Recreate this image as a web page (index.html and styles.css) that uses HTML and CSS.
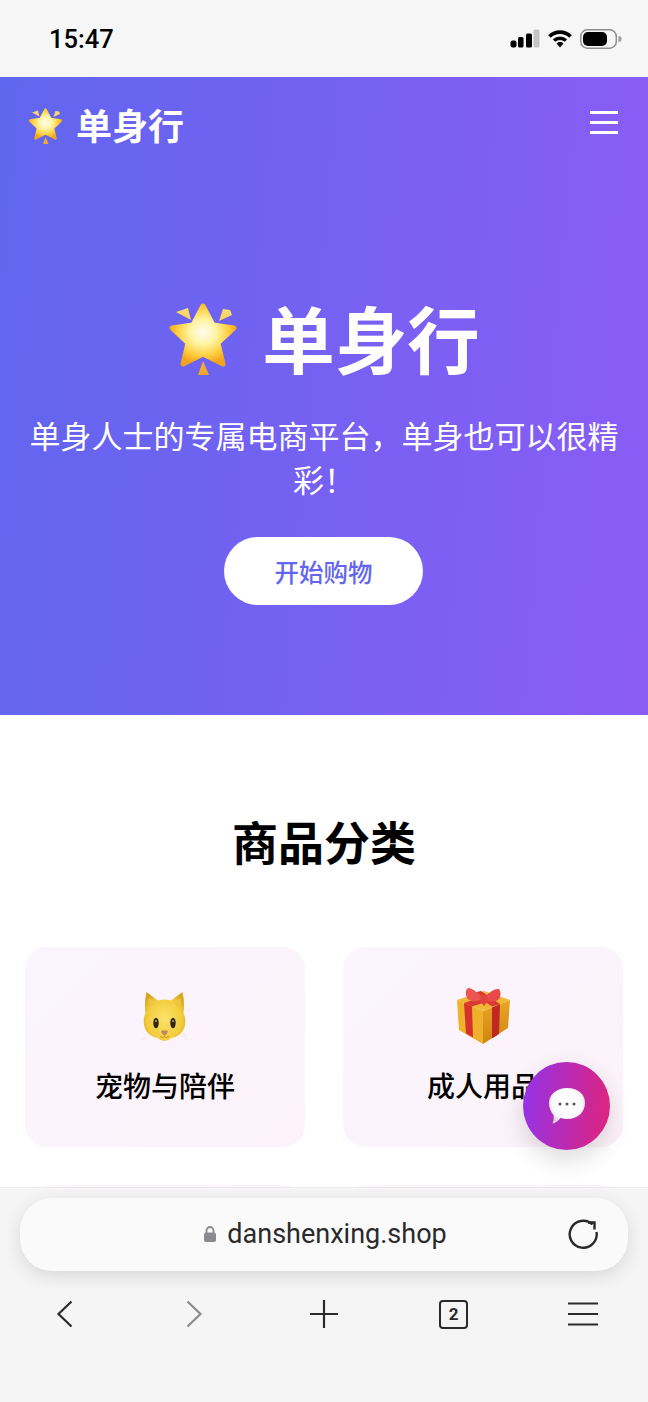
FILE: index.html
```html
<!DOCTYPE html>
<html lang="zh-CN">
<head>
<meta charset="utf-8">
<title>单身行</title>
<link rel="stylesheet" href="styles.css">
</head>
<body>
<svg class="defs" width="0" height="0" aria-hidden="true">
  <defs>
    <radialGradient id="starFill" cx="50%" cy="45%" r="55%">
      <stop offset="0" stop-color="#fffdf0"/>
      <stop offset="0.4" stop-color="#fff3a0"/>
      <stop offset="0.75" stop-color="#fdcf3e"/>
      <stop offset="1" stop-color="#f3a41f"/>
    </radialGradient>
    <linearGradient id="sparkFill" x1="0" y1="0" x2="0" y2="1">
      <stop offset="0" stop-color="#fbdc70"/>
      <stop offset="1" stop-color="#eea52a"/>
    </linearGradient>
    <radialGradient id="catFill" cx="50%" cy="55%" r="60%">
      <stop offset="0" stop-color="#fbe36a"/>
      <stop offset="0.7" stop-color="#f3cc3e"/>
      <stop offset="1" stop-color="#d9a31e"/>
    </radialGradient>
    <linearGradient id="boxFill" x1="0" y1="0" x2="0" y2="1">
      <stop offset="0" stop-color="#e9a626"/>
      <stop offset="1" stop-color="#cf8512"/>
    </linearGradient>
    <radialGradient id="bubbleFill" cx="50%" cy="45%" r="58%">
      <stop offset="0" stop-color="#ffffff"/>
      <stop offset="0.7" stop-color="#fbfbfb"/>
      <stop offset="1" stop-color="#d4d0d8"/>
    </radialGradient>
    <symbol id="starEmoji" viewBox="0 0 72 76">
      <path fill="url(#starFill)" stroke="url(#starFill)" stroke-width="5" stroke-linejoin="round" d="M35 5 L45 24 L66 27 L50 42 L55 63 L35 53 L15 63 L20 42 L4 27 L25 24 Z"/>
      <path fill="url(#sparkFill)" d="M8 11 L20 7 L23 19 Z M62 9 L64 14 L51 20 L55 8 Z M35 60 L41 74 L30 74 Z"/>
    </symbol>
  </defs>
</svg>
<div class="phone">
  <header class="status">
    <span class="time">15:47</span>
    <div class="status-icons">
      <svg width="30" height="20" viewBox="0 0 30 20">
        <rect x="0.500" y="11.500" width="6" height="7" rx="2" fill="#000"/>
        <rect x="8" y="8" width="5.500" height="10.500" rx="1.500" fill="#000"/>
        <rect x="16" y="4.500" width="6" height="14" rx="1.500" fill="#000"/>
        <rect x="23.500" y="0.500" width="6" height="18" rx="1.500" fill="#c4c4c4"/>
      </svg>
      <svg width="24" height="18" viewBox="0 0 24 18">
        <path d="M1.500 6.500 A15 15 0 0 1 22.500 6.500" fill="none" stroke="#000" stroke-width="3.800"/>
        <path d="M6 10.500 A9 9 0 0 1 18 10.500" fill="none" stroke="#000" stroke-width="3.400"/>
        <path d="M8.500 13.500 A5 5 0 0 1 15.500 13.500 L12 17.500 Z" fill="#000"/>
      </svg>
      <svg width="42" height="20" viewBox="0 0 42 20">
        <rect x="0.800" y="0.800" width="35.500" height="18.400" rx="6.500" fill="none" stroke="#8f8f8f" stroke-width="1.500"/>
        <rect x="3" y="3" width="24" height="14" rx="5" fill="#000"/>
        <path d="M38.500 7 a3 3 0 0 1 0 6 Z" fill="#9a9a9a"/>
      </svg>
    </div>
  </header>

  <main class="page">
    <section class="hero">
      <nav class="nav">
        <div class="logo">
          <svg class="logo-star"><use href="#starEmoji"/></svg>
          <span class="logo-text">单身行</span>
        </div>
        <div class="burger"><i></i><i></i><i></i></div>
      </nav>
      <div class="hero-body">
        <h1 class="hero-title">
          <svg class="hero-star"><use href="#starEmoji"/></svg>
          <span>单身行</span>
        </h1>
        <p class="hero-sub">单身人士的专属电商平台，单身也可以很精彩！</p>
        <a class="cta">开始购物</a>
      </div>
    </section>

    <section class="cats">
      <h2 class="cats-title">商品分类</h2>
      <div class="grid">
        <div class="card">
          <svg class="card-icon" viewBox="0 0 56 56">
            <path fill="url(#catFill)" d="M9.500 4 L21 12.500 Q27.500 10.500 34 12.500 L45.500 4 Q48 15 46.500 25 Q49.500 32 47.500 39 Q45 48 34.500 50 Q31 53 27.500 53 Q24 53 20.500 50 Q10 48 7.500 39 Q5.500 32 8.500 25 Q7 15 9.500 4 Z"/>
            <path fill="#eec53e" d="M11.500 10 L18 15 Q14 18 12 22 Z M43.500 10 L37 15 Q41 18 43 22 Z"/>
            <ellipse cx="19" cy="35" rx="2.700" ry="5.200" fill="#33240f"/>
            <ellipse cx="36" cy="35" rx="2.700" ry="5.200" fill="#33240f"/>
            <circle cx="19" cy="33" r="0.800" fill="#fff"/>
            <circle cx="36" cy="33" r="0.800" fill="#fff"/>
            <path fill="#c08a5e" d="M24 43 Q27.500 41.500 31 43 Q30 47 27.500 47 Q25 47 24 43 Z"/>
            <path d="M27.500 47 V48.500 M23 48.500 Q26 50.500 27.500 48.500 Q29 50.500 32 48.500" fill="none" stroke="#b5871f" stroke-width="0.800"/>
            <path d="M4 52 L10 48 M50 48 L45 45.500 M51 52 L45 48" stroke="#e6e1da" stroke-width="0.700"/>
          </svg>
          <span class="card-label">宠物与陪伴</span>
        </div>
        <div class="card">
          <svg class="card-icon" viewBox="0 0 56 56">
            <path fill="#efb02b" d="M2 12 L28 23 L28 56 L4 42 Z"/>
            <path fill="url(#boxFill)" d="M28 23 L55 12 L53 40 L28 56 Z"/>
            <path fill="#f0b835" d="M2 12 L29 3 L55 12 L28 23 Z"/>
            <path fill="#d6322c" d="M9 15 L17 18.500 L18 49.500 L11 45.500 Z"/>
            <path fill="#c02824" d="M37 19.500 L45 16 L44 46 L37 50.500 Z"/>
            <path fill="#d93b34" d="M9 15 L36 6 L45 9.500 L17 18.500 Z"/>
            <path fill="#d93b34" d="M17 5 L37 18.500 L45 16 L26 3 Z"/>
            <path fill="#ec5650" d="M27 9 Q18 0 13 0 Q9 3 12 10 Q15 15 26 12 Z"/>
            <path fill="#e8494a" d="M30 9 Q38 0 44 1 Q47 5 44 11 Q40 15 31 13 Z"/>
            <path fill="#e04442" d="M26 7 H32 L33 13 L29 18 L25 13 Z"/>
          </svg>
          <span class="card-label">成人用品</span>
        </div>
        <div class="card"></div>
        <div class="card"></div>
      </div>
    </section>
  </main>

  <footer class="browser">
    <div class="address">
      <span class="url">
        <svg class="lock" width="14" height="18" viewBox="0 0 14 18">
          <path d="M3.500 8 V5.500 a3.500 3.500 0 0 1 7 0 V8" fill="none" stroke="#8a8a8e" stroke-width="1.800"/>
          <rect x="1" y="7.500" width="12" height="9.500" rx="2" fill="#8a8a8e"/>
        </svg>
        <span>danshenxing.shop</span>
      </span>
      <svg class="reload" width="30" height="32" viewBox="0 0 30 32">
        <path d="M28.500 15 A13.500 13.500 0 1 1 24.500 7.500" fill="none" stroke="#2a2a2c" stroke-width="2.400"/>
        <path d="M20 5.500 H26.500 V12.500" fill="none" stroke="#2a2a2c" stroke-width="2.400"/>
      </svg>
    </div>
    <div class="toolbar">
      <svg width="30" height="30" viewBox="0 0 30 30"><path d="M21.500 2.500 L8.500 15 L21.500 27.500" fill="none" stroke="#2a2a2c" stroke-width="2.200"/></svg>
      <svg width="30" height="30" viewBox="0 0 30 30"><path d="M8.500 2.500 L21.500 15 L8.500 27.500" fill="none" stroke="#8a8a8e" stroke-width="2.200"/></svg>
      <svg width="30" height="30" viewBox="0 0 30 30"><path d="M15 1 V29 M1 15 H29" fill="none" stroke="#2a2a2c" stroke-width="2.200"/></svg>
      <span class="tabs">2</span>
      <svg width="32" height="30" viewBox="0 0 32 30"><path d="M1 4.500 H31 M1 15 H31 M1 25.500 H31" fill="none" stroke="#2a2a2c" stroke-width="2.200"/></svg>
    </div>
  </footer>

  <button class="fab" aria-label="聊天">
    <svg width="38" height="38" viewBox="0 0 38 38">
      <path fill="url(#bubbleFill)" d="M19 1 C31 1 37 8 37 16 C37 25 30 32 19 32 C17 32 14.500 31.500 12.500 31 C10.500 33.500 8 36 4.500 36.500 C5.500 34 6 31 5.500 28 C3 25 1 21 1 16 C1 8 8 1 19 1 Z"/>
      <circle cx="12" cy="17" r="1.500" fill="#55555a"/>
      <circle cx="19" cy="17" r="1.500" fill="#55555a"/>
      <circle cx="26" cy="17" r="1.500" fill="#55555a"/>
    </svg>
  </button>
</div>
</body>
</html>
```

FILE: styles.css
```css
* { box-sizing: border-box; }
html, body { margin: 0; padding: 0; }
body {
  width: 648px;
  height: 1402px;
  overflow: hidden;
  font-family: "Noto Sans CJK SC", "Noto Sans", sans-serif;
  background: #fff;
}
.defs { display: block; height: 0; }
.phone {
  position: relative;
  width: 648px;
  height: 1402px;
  display: flex;
  flex-direction: column;
  overflow: hidden;
}

/* status bar */
.status {
  flex: 0 0 77px;
  background: #f6f6f6;
  display: flex;
  align-items: center;
  justify-content: space-between;
  padding: 0 26px 0 49px;
}
.time {
  font-family: Roboto, Inter, sans-serif;
  font-size: 25.500px;
  font-weight: 500;
  color: #000;
}
.status-icons { display: flex; align-items: center; gap: 8px; }

/* page */
.page {
  flex: 1 1 0;
  min-height: 0;
  overflow: hidden;
  background: #fff;
}
.hero {
  height: 638px;
  background: linear-gradient(95deg, #6066ef 0%, #8b5cf6 100%);
  color: #fff;
  display: flex;
  flex-direction: column;
}
.nav {
  display: flex;
  align-items: center;
  justify-content: space-between;
  padding: 0 30px 0 28px;
  height: 98px;
}
.logo {
  display: flex;
  align-items: center;
  gap: 12px;
  font-size: 36px;
  font-weight: 700;
  line-height: 50px;
}
.logo-text { margin-top: -4px; }
.logo-star { width: 36px; height: 38px; }
.burger { display: flex; flex-direction: column; gap: 7px; width: 28px; margin-top: -8px; }
.burger i { display: block; height: 3px; background: #fff; }
.hero-body {
  display: flex;
  flex-direction: column;
  align-items: center;
  padding: 0 28px;
}
.hero-title {
  margin: 112px 0 0;
  display: flex;
  align-items: center;
  gap: 22px;
  font-size: 72.500px;
  font-weight: 700;
  line-height: 100px;
}
.hero-star { width: 72px; height: 76px; margin-top: 4px; }
.hero-sub {
  margin: 26px 0 0;
  font-size: 31px;
  line-height: 44px;
  text-align: center;
  font-weight: 400;
}
.cta {
  margin: 36px 1px 0 0;
  width: 199px;
  height: 68px;
  border-radius: 34px;
  background: #fff;
  color: #6366f1;
  font-size: 24.500px;
  font-weight: 500;
  display: flex;
  align-items: center;
  justify-content: center;
}

/* categories */
.cats { padding: 92px 25px 0; }
.cats-title {
  margin: 0;
  text-align: center;
  font-size: 46px;
  font-weight: 700;
  line-height: 66px;
  color: #000;
}
.grid {
  margin-top: 74px;
  display: grid;
  grid-template-columns: 280px 280px;
  column-gap: 38px;
  row-gap: 38px;
}
.card {
  height: 200px;
  border-radius: 22px;
  background: linear-gradient(135deg, #faf5ff 0%, #fdf2f8 100%);
  display: flex;
  flex-direction: column;
  align-items: center;
}
.card-icon { width: 56px; height: 56px; margin-top: 41px; flex: none; }
.card-label {
  margin-top: 21px;
  font-size: 28px;
  font-weight: 500;
  line-height: 40px;
  color: #000;
}

/* browser chrome */
.browser {
  flex: 0 0 214px;
  background: #f6f5f6;
  box-shadow: 0 -1px 0 #ececee;
  position: relative;
  padding: 10px 20px 0;
}
.address {
  height: 73px;
  border-radius: 32px;
  background: #fbfafa;
  box-shadow: 0 5px 18px rgba(0, 0, 0, 0.12);
  display: flex;
  align-items: center;
  justify-content: center;
  position: relative;
}
.url {
  display: flex;
  align-items: center;
  gap: 10px;
  font-family: Roboto, "Liberation Sans", sans-serif;
  font-size: 27px;
  color: #2a2a2c;
  margin-left: 2px;
  margin-top: -2px;
}
.reload { position: absolute; right: 30px; top: 19px; }
.toolbar {
  margin: 13px -20px 0;
  display: grid;
  grid-template-columns: repeat(5, 1fr);
  justify-items: center;
  align-items: center;
  height: 60px;
}
.tabs {
  width: 29px;
  height: 29px;
  border: 2px solid #2a2a2c;
  border-radius: 4px;
  display: flex;
  align-items: center;
  justify-content: center;
  font-family: Roboto, "Liberation Sans", sans-serif;
  font-weight: 700;
  font-size: 17px;
  color: #2a2a2c;
}

/* floating chat button */
.fab {
  position: absolute;
  left: 523px;
  top: 1062px;
  width: 87px;
  height: 88px;
  border: 0;
  padding: 0;
  border-radius: 50%;
  background: linear-gradient(95deg, #9333ea 0%, #e0237a 100%);
  box-shadow: 0 10px 24px rgba(0, 0, 0, 0.14);
  display: flex;
  align-items: center;
  justify-content: center;
}
```
